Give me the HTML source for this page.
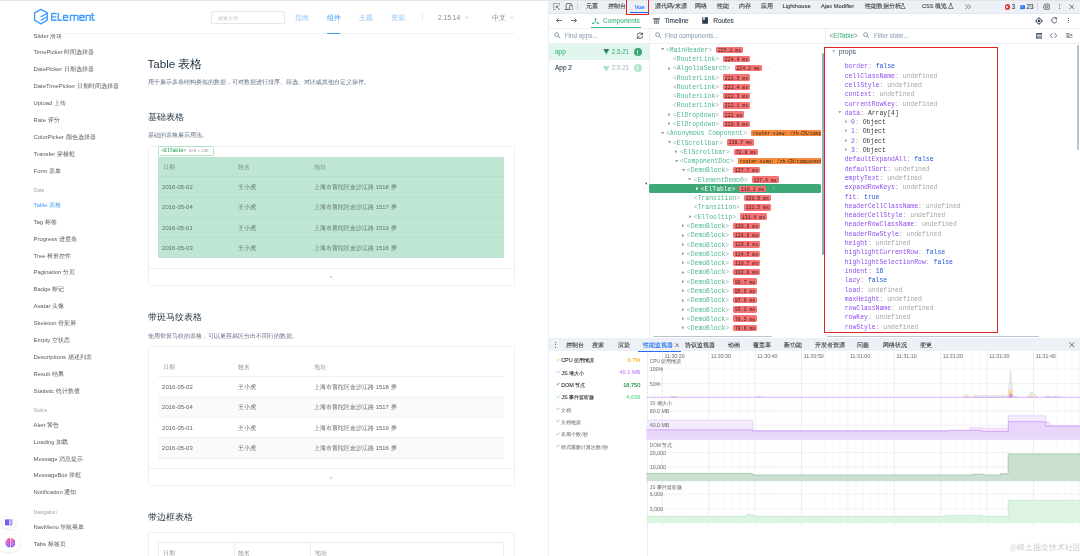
<!DOCTYPE html><html><head><meta charset="utf-8"><style>
html,body{margin:0;padding:0;width:1080px;height:556px;overflow:hidden;background:#fff}
.a,.ts,.tm,.tf{position:absolute}
.ts,.tm,.tf{white-space:nowrap}
.ts{font-family:"Liberation Sans",sans-serif}
#dt .ts{-webkit-text-stroke-width:0.1px}
.tm{font-family:"Liberation Mono",monospace}
.tf{font-family:"Liberation Serif",serif}
</style></head><body>
<div id="root" style="position:absolute;left:0;top:0;width:1080px;height:556px;background:#fff;will-change:transform;overflow:hidden">
<div class="a" style="left:0.00px;top:0.00px;width:1080.00px;height:1.00px;background:#e4e4e4"></div>
<div class="a" style="left:62.00px;top:33.00px;width:453.00px;height:0.80px;background:#f0f1f3"></div>
<svg class="a" style="left:33px;top:8px" width="64" height="18" viewBox="0 0 64 18">
<path d="M8 1.3 L14.3 4.9 L14.3 12.2 L8 15.8 L1.6 12.2 L1.6 4.9 Z" fill="none" stroke="#409eff" stroke-width="1.45" stroke-linejoin="round"/>
<path d="M8.1 8.6 L14 5.5 M8.1 12.1 L14 9.0" stroke="#409eff" stroke-width="1.4" fill="none" stroke-linecap="round"/>
</svg>
<svg class="a" style="left:48px;top:10px" width="50" height="14" viewBox="0 0 50 14"><g fill="none" stroke="#409eff" stroke-width="1.35" stroke-linejoin="round">
<path d="M8.6 3.5 H3.7 V10.2 H8.6 M3.7 6.8 H8.3"/>
<path d="M10.2 2.8 V10.2 H13.9"/>
<path d="M20.4 10.2 H16.3 Q15.5 10.2 15.5 9.4 V6.1 Q15.5 5.3 16.3 5.3 H18.9 Q19.7 5.3 19.7 6.1 V7.4 H15.5"/>
<path d="M22.5 10.9 V5.3 H29.1 Q29.9 5.3 29.9 6.1 V10.9 M26.2 5.3 V10.9"/>
<path d="M36.8 10.2 H32.7 Q31.9 10.2 31.9 9.4 V6.1 Q31.9 5.3 32.7 5.3 H35.3 Q36.1 5.3 36.1 6.1 V7.4 H31.9"/>
<path d="M38.2 10.9 V5.3 H41.3 Q42.1 5.3 42.1 6.1 V10.9"/>
<path d="M44.3 3.0 V9.4 Q44.3 10.2 45.1 10.2 H46.8 M43.0 5.3 H46.3"/>
</g></svg>
<div class="a" style="left:210.60px;top:11.20px;width:74.40px;height:13.20px;border:0.8px solid #e3e6eb;border-radius:2px;box-sizing:border-box"></div>
<div class="ts" style="left:217.50px;top:11.90px;line-height:12px;font-size:5.2px;color:#c4c8cf;">搜索文档</div>
<div class="ts" style="left:295.00px;top:11.60px;line-height:12px;font-size:6.7px;color:#8ec5fb;">指南</div>
<div class="ts" style="left:326.90px;top:11.60px;line-height:12px;font-size:6.7px;color:#409eff;">组件</div>
<div class="a" style="left:327.00px;top:32.90px;width:13.20px;height:1.30px;background:#409eff"></div>
<div class="ts" style="left:359.00px;top:11.60px;line-height:12px;font-size:6.7px;color:#8ec5fb;">主题</div>
<div class="ts" style="left:391.00px;top:11.60px;line-height:12px;font-size:6.7px;color:#8ec5fb;">资源</div>
<div class="a" style="left:422.30px;top:14.40px;width:0.70px;height:6.20px;background:#e9e9e9"></div>
<div class="ts" style="left:438.00px;top:11.60px;line-height:12px;font-size:6.7px;color:#888;">2.15.14</div>
<div class="ts" style="left:492.00px;top:11.60px;line-height:12px;font-size:6.7px;color:#888;">中文</div>
<svg class="a" style="left:465.1px;top:15.8px" width="4.4" height="3" viewBox="0 0 4.4 3"><path d="M0.3 0.5 L2.2 2.4 L4.1 0.5" fill="none" stroke="#aaa" stroke-width="0.6"/></svg>
<svg class="a" style="left:510.00000000000006px;top:15.8px" width="4.4" height="3" viewBox="0 0 4.4 3"><path d="M0.3 0.5 L2.2 2.4 L4.1 0.5" fill="none" stroke="#aaa" stroke-width="0.6"/></svg>
<div class="a" style="left:0;top:34.2px;width:140px;height:523px;overflow:hidden">
<div class="ts" style="left:33.60px;top:-4.58px;line-height:12px;font-size:5.88px;color:#5a5a5a;">Slider 滑块</div>
<div class="ts" style="left:33.60px;top:12.30px;line-height:12px;font-size:5.88px;color:#5a5a5a;">TimePicker 时间选择器</div>
<div class="ts" style="left:33.60px;top:29.18px;line-height:12px;font-size:5.88px;color:#5a5a5a;">DatePicker 日期选择器</div>
<div class="ts" style="left:33.60px;top:46.06px;line-height:12px;font-size:5.88px;color:#5a5a5a;">DateTimePicker 日期时间选择器</div>
<div class="ts" style="left:33.60px;top:62.94px;line-height:12px;font-size:5.88px;color:#5a5a5a;">Upload 上传</div>
<div class="ts" style="left:33.60px;top:79.82px;line-height:12px;font-size:5.88px;color:#5a5a5a;">Rate 评分</div>
<div class="ts" style="left:33.60px;top:96.70px;line-height:12px;font-size:5.88px;color:#5a5a5a;">ColorPicker 颜色选择器</div>
<div class="ts" style="left:33.60px;top:113.58px;line-height:12px;font-size:5.88px;color:#5a5a5a;">Transfer 穿梭框</div>
<div class="ts" style="left:33.60px;top:130.46px;line-height:12px;font-size:5.88px;color:#5a5a5a;">Form 表单</div>
<div class="ts" style="left:33.60px;top:151.20px;line-height:12px;font-size:4.95px;color:#a5a5a5;">Data</div>
<div class="ts" style="left:33.60px;top:164.72px;line-height:12px;font-size:5.88px;color:#409eff;">Table 表格</div>
<div class="ts" style="left:33.60px;top:181.60px;line-height:12px;font-size:5.88px;color:#5a5a5a;">Tag 标签</div>
<div class="ts" style="left:33.60px;top:198.48px;line-height:12px;font-size:5.88px;color:#5a5a5a;">Progress 进度条</div>
<div class="ts" style="left:33.60px;top:215.36px;line-height:12px;font-size:5.88px;color:#5a5a5a;">Tree 树形控件</div>
<div class="ts" style="left:33.60px;top:232.24px;line-height:12px;font-size:5.88px;color:#5a5a5a;">Pagination 分页</div>
<div class="ts" style="left:33.60px;top:249.12px;line-height:12px;font-size:5.88px;color:#5a5a5a;">Badge 标记</div>
<div class="ts" style="left:33.60px;top:266.00px;line-height:12px;font-size:5.88px;color:#5a5a5a;">Avatar 头像</div>
<div class="ts" style="left:33.60px;top:282.88px;line-height:12px;font-size:5.88px;color:#5a5a5a;">Skeleton 骨架屏</div>
<div class="ts" style="left:33.60px;top:299.76px;line-height:12px;font-size:5.88px;color:#5a5a5a;">Empty 空状态</div>
<div class="ts" style="left:33.60px;top:316.64px;line-height:12px;font-size:5.88px;color:#5a5a5a;">Descriptions 描述列表</div>
<div class="ts" style="left:33.60px;top:333.52px;line-height:12px;font-size:5.88px;color:#5a5a5a;">Result 结果</div>
<div class="ts" style="left:33.60px;top:350.40px;line-height:12px;font-size:5.88px;color:#5a5a5a;">Statistic 统计数值</div>
<div class="ts" style="left:33.60px;top:371.10px;line-height:12px;font-size:4.95px;color:#a5a5a5;">Notice</div>
<div class="ts" style="left:33.60px;top:384.66px;line-height:12px;font-size:5.88px;color:#5a5a5a;">Alert 警告</div>
<div class="ts" style="left:33.60px;top:401.54px;line-height:12px;font-size:5.88px;color:#5a5a5a;">Loading 加载</div>
<div class="ts" style="left:33.60px;top:418.42px;line-height:12px;font-size:5.88px;color:#5a5a5a;">Message 消息提示</div>
<div class="ts" style="left:33.60px;top:435.30px;line-height:12px;font-size:5.88px;color:#5a5a5a;">MessageBox 弹框</div>
<div class="ts" style="left:33.60px;top:452.18px;line-height:12px;font-size:5.88px;color:#5a5a5a;">Notification 通知</div>
<div class="ts" style="left:33.60px;top:473.10px;line-height:12px;font-size:4.95px;color:#a5a5a5;">Navigation</div>
<div class="ts" style="left:33.60px;top:486.44px;line-height:12px;font-size:5.88px;color:#5a5a5a;">NavMenu 导航菜单</div>
<div class="ts" style="left:33.60px;top:503.32px;line-height:12px;font-size:5.88px;color:#5a5a5a;">Tabs 标签页</div>
</div>
<div class="a" style="left:2.3px;top:515.5px;width:13.8px;height:13.8px;border-radius:50%;background:#fff;box-shadow:0 0.5px 3px rgba(0,0,0,0.12)"></div>
<svg class="a" style="left:5.4px;top:519px" width="7.6" height="6.8" viewBox="0 0 7.6 6.8"><path d="M0 0.6 L4 0.2 L4 6.6 L0 6.2 Z" fill="#7b5cf0"/><path d="M4.6 0.2 L7.4 0.6 L7.4 6.2 L4.6 6.6 Z" fill="#8f73f5"/><rect x="5.4" y="1.4" width="1.1" height="4" fill="#fff" opacity="0.8"/></svg>
<div class="a" style="left:-3px;top:534.3px;width:23px;height:18px;border-radius:9px;background:#fff;box-shadow:0 0.5px 3px rgba(0,0,0,0.12)"></div>
<svg class="a" style="left:4.5px;top:538.4px" width="10.8" height="9.8" viewBox="0 0 10.8 9.8"><defs><linearGradient id="bg" x1="0" y1="0" x2="1" y2="1"><stop offset="0" stop-color="#ff8a3d"/><stop offset="0.4" stop-color="#e94bd0"/><stop offset="0.7" stop-color="#8b5cf6"/><stop offset="1" stop-color="#3b82f6"/></linearGradient></defs>
<path d="M5.1 0.6 C3.6 0 2 0.6 1.8 1.9 C0.6 2.2 0.1 3.5 0.6 4.6 C0 5.6 0.4 7 1.5 7.4 C1.7 8.8 3.4 9.6 5.1 9 Z" fill="url(#bg)"/>
<path d="M5.7 0.6 C7.2 0 8.8 0.6 9 1.9 C10.2 2.2 10.7 3.5 10.2 4.6 C10.8 5.6 10.4 7 9.3 7.4 C9.1 8.8 7.4 9.6 5.7 9 Z" fill="url(#bg)"/>
<path d="M2.2 3.2 L4 3.2 M1.6 5.4 L3.8 5.4 M2.4 7.2 L4 6.6 M6.8 3.2 L8.6 3.2 M7 5.4 L9.2 5.4 M6.8 6.6 L8.4 7.2" stroke="#fff" stroke-width="0.45" opacity="0.8"/></svg>
<div class="ts" style="left:147.50px;top:56.10px;line-height:16px;font-size:11.6px;color:#1f2f3d;">Table 表格</div>
<div class="ts" style="left:147.50px;top:76.40px;line-height:12px;font-size:5.88px;color:#5e6d82;">用于展示多条结构类似的数据，可对数据进行排序、筛选、对比或其他自定义操作。</div>
<div class="ts" style="left:147.50px;top:109.60px;line-height:14px;font-size:9.24px;color:#1f2f3d;">基础表格</div>
<div class="ts" style="left:147.50px;top:129.30px;line-height:12px;font-size:5.88px;color:#5e6d82;">基础的表格展示用法。</div>
<div class="a" style="left:147.50px;top:146.00px;width:367.10px;height:140.10px;border:0.8px solid #efefef;border-radius:1.6px;box-sizing:border-box"></div>
<div class="a" style="left:147.90px;top:268.30px;width:366.30px;height:0.70px;background:#eff2fa"></div>
<svg class="a" style="left:328.5px;top:276.3px" width="4" height="2.6" viewBox="0 0 4 2.6"><path d="M0 0 L4 0 L2 2.4 Z" fill="#d3dce6"/></svg>
<div class="a" style="left:158.20px;top:156.90px;width:345.60px;height:100.80px;background:#bfe6d3;border-radius:0 1px 1px 1px"></div>
<div class="a" style="left:158.20px;top:176.10px;width:345.60px;height:0.60px;background:#b6dec9"></div>
<div class="a" style="left:158.20px;top:196.50px;width:345.60px;height:0.60px;background:#b6dec9"></div>
<div class="a" style="left:158.20px;top:216.90px;width:345.60px;height:0.60px;background:#b6dec9"></div>
<div class="a" style="left:158.20px;top:237.30px;width:345.60px;height:0.60px;background:#b6dec9"></div>
<div class="ts" style="left:162.70px;top:160.80px;line-height:12px;font-size:5.88px;color:#7b9184;">日期</div>
<div class="ts" style="left:237.90px;top:160.80px;line-height:12px;font-size:5.88px;color:#7b9184;">姓名</div>
<div class="ts" style="left:314.20px;top:160.80px;line-height:12px;font-size:5.88px;color:#7b9184;">地址</div>
<div class="ts" style="left:162.10px;top:180.80px;line-height:12px;font-size:6.0px;color:#5e7268;">2016-05-02</div>
<div class="ts" style="left:238.30px;top:180.80px;line-height:12px;font-size:5.88px;color:#5e7268;">王小虎</div>
<div class="ts" style="left:314.20px;top:180.80px;line-height:12px;font-size:5.88px;color:#5e7268;">上海市普陀区金沙江路 1518 弄</div>
<div class="ts" style="left:162.10px;top:201.20px;line-height:12px;font-size:6.0px;color:#5e7268;">2016-05-04</div>
<div class="ts" style="left:238.30px;top:201.20px;line-height:12px;font-size:5.88px;color:#5e7268;">王小虎</div>
<div class="ts" style="left:314.20px;top:201.20px;line-height:12px;font-size:5.88px;color:#5e7268;">上海市普陀区金沙江路 1517 弄</div>
<div class="ts" style="left:162.10px;top:221.60px;line-height:12px;font-size:6.0px;color:#5e7268;">2016-05-01</div>
<div class="ts" style="left:238.30px;top:221.60px;line-height:12px;font-size:5.88px;color:#5e7268;">王小虎</div>
<div class="ts" style="left:314.20px;top:221.60px;line-height:12px;font-size:5.88px;color:#5e7268;">上海市普陀区金沙江路 1519 弄</div>
<div class="ts" style="left:162.10px;top:242.00px;line-height:12px;font-size:6.0px;color:#5e7268;">2016-05-03</div>
<div class="ts" style="left:238.30px;top:242.00px;line-height:12px;font-size:5.88px;color:#5e7268;">王小虎</div>
<div class="ts" style="left:314.20px;top:242.00px;line-height:12px;font-size:5.88px;color:#5e7268;">上海市普陀区金沙江路 1516 弄</div>
<div class="a" style="left:157.60px;top:146.20px;width:56.90px;height:9.50px;background:#fff;border:0.7px solid #b4e2c9;border-radius:1.2px;box-sizing:border-box"></div>
<div class="tm" style="left:161.5px;top:145.95px;line-height:10px;font-size:4.56px;color:#999;font-weight:bold">&lt;<span style="color:#2fae5f">ElTable</span>&gt;</div>
<div class="ts" style="left:188.90px;top:146.00px;line-height:10px;font-size:4.4px;color:#a0a0a0;">828 × 248</div>
<div class="ts" style="left:147.60px;top:309.75px;line-height:14px;font-size:9.24px;color:#1f2f3d;">带斑马纹表格</div>
<div class="ts" style="left:147.50px;top:329.50px;line-height:12px;font-size:5.88px;color:#5e6d82;">使用带斑马纹的表格，可以更容易区分出不同行的数据。</div>
<div class="a" style="left:147.50px;top:346.40px;width:367.10px;height:140.10px;border:0.8px solid #efefef;border-radius:1.6px;box-sizing:border-box"></div>
<div class="a" style="left:147.90px;top:468.40px;width:366.30px;height:0.70px;background:#eff2fa"></div>
<svg class="a" style="left:328.5px;top:476.7px" width="4" height="2.6" viewBox="0 0 4 2.6"><path d="M0 0 L4 0 L2 2.4 Z" fill="#d3dce6"/></svg>
<div class="a" style="left:158.30px;top:396.60px;width:346.10px;height:20.50px;background:#fafafa"></div>
<div class="a" style="left:158.30px;top:437.50px;width:346.10px;height:20.60px;background:#fafafa"></div>
<div class="a" style="left:158.30px;top:375.80px;width:346.10px;height:0.70px;background:#eef0f5"></div>
<div class="a" style="left:158.30px;top:457.80px;width:346.10px;height:0.70px;background:#eef0f5"></div>
<div class="a" style="left:158.30px;top:396.30px;width:346.10px;height:0.60px;background:#f3f4f8"></div>
<div class="a" style="left:158.30px;top:416.90px;width:346.10px;height:0.60px;background:#f3f4f8"></div>
<div class="a" style="left:158.30px;top:437.30px;width:346.10px;height:0.60px;background:#f3f4f8"></div>
<div class="ts" style="left:162.70px;top:360.60px;line-height:12px;font-size:5.88px;color:#909399;">日期</div>
<div class="ts" style="left:237.90px;top:360.60px;line-height:12px;font-size:5.88px;color:#909399;">姓名</div>
<div class="ts" style="left:314.20px;top:360.60px;line-height:12px;font-size:5.88px;color:#909399;">地址</div>
<div class="ts" style="left:162.10px;top:380.90px;line-height:12px;font-size:6.0px;color:#606266;">2016-05-02</div>
<div class="ts" style="left:238.30px;top:380.90px;line-height:12px;font-size:5.88px;color:#606266;">王小虎</div>
<div class="ts" style="left:314.20px;top:380.90px;line-height:12px;font-size:5.88px;color:#606266;">上海市普陀区金沙江路 1518 弄</div>
<div class="ts" style="left:162.10px;top:401.30px;line-height:12px;font-size:6.0px;color:#606266;">2016-05-04</div>
<div class="ts" style="left:238.30px;top:401.30px;line-height:12px;font-size:5.88px;color:#606266;">王小虎</div>
<div class="ts" style="left:314.20px;top:401.30px;line-height:12px;font-size:5.88px;color:#606266;">上海市普陀区金沙江路 1517 弄</div>
<div class="ts" style="left:162.10px;top:421.70px;line-height:12px;font-size:6.0px;color:#606266;">2016-05-01</div>
<div class="ts" style="left:238.30px;top:421.70px;line-height:12px;font-size:5.88px;color:#606266;">王小虎</div>
<div class="ts" style="left:314.20px;top:421.70px;line-height:12px;font-size:5.88px;color:#606266;">上海市普陀区金沙江路 1519 弄</div>
<div class="ts" style="left:162.10px;top:442.10px;line-height:12px;font-size:6.0px;color:#606266;">2016-05-03</div>
<div class="ts" style="left:238.30px;top:442.10px;line-height:12px;font-size:5.88px;color:#606266;">王小虎</div>
<div class="ts" style="left:314.20px;top:442.10px;line-height:12px;font-size:5.88px;color:#606266;">上海市普陀区金沙江路 1516 弄</div>
<div class="ts" style="left:147.60px;top:510.20px;line-height:14px;font-size:9.24px;color:#1f2f3d;">带边框表格</div>
<div class="a" style="left:147.50px;top:531.60px;width:367.10px;height:40.00px;border:0.8px solid #efefef;border-radius:1.6px;box-sizing:border-box"></div>
<div class="a" style="left:158.30px;top:542.40px;width:346.10px;height:20.00px;border:0.7px solid #eceef1;border-bottom:none;box-sizing:border-box"></div>
<div class="a" style="left:234.40px;top:542.40px;width:0.70px;height:20.00px;background:#eceef1"></div>
<div class="a" style="left:310.30px;top:542.40px;width:0.70px;height:20.00px;background:#eceef1"></div>
<div class="ts" style="left:163.30px;top:546.60px;line-height:12px;font-size:5.88px;color:#909399;">日期</div>
<div class="ts" style="left:238.30px;top:546.60px;line-height:12px;font-size:5.88px;color:#909399;">姓名</div>
<div class="ts" style="left:314.60px;top:546.60px;line-height:12px;font-size:5.88px;color:#909399;">地址</div>
<div id="dt">
<div class="a" style="left:548.00px;top:1.00px;width:532.00px;height:555.00px;background:#fff"></div>
<div class="a" style="left:548.00px;top:0.00px;width:1.00px;height:556.00px;background:#e6eefa"></div>
<div class="a" style="left:549.00px;top:1.00px;width:531.00px;height:11.90px;background:#edf0f7"></div>
<div class="a" style="left:549.00px;top:12.90px;width:531.00px;height:0.50px;background:#e3e7ef"></div>
<svg class="a" style="left:552.8px;top:2.9px" width="7.4" height="7.4" viewBox="0 0 7.4 7.4"><path d="M2.6 6.8 H0.6 V0.6 H6.8 V2.6" fill="none" stroke="#4a4a4a" stroke-width="0.7" stroke-dasharray="1.1 0.6"/><path d="M3.2 3.2 L6.9 6.9 M3.2 3.2 H5.2 M3.2 3.2 V5.2" fill="none" stroke="#4a4a4a" stroke-width="0.7"/></svg>
<svg class="a" style="left:564.8px;top:3.0px" width="8.4" height="7.4" viewBox="0 0 8.4 7.4"><path d="M1.2 5.8 V0.6 H6.4 V1.8" fill="none" stroke="#4a4a4a" stroke-width="0.7"/><path d="M0 6.4 H4" stroke="#4a4a4a" stroke-width="0.9"/><rect x="4.6" y="2.4" width="3.3" height="4.6" rx="0.5" fill="none" stroke="#4a4a4a" stroke-width="0.7"/></svg>
<div class="a" style="left:577.00px;top:3.00px;width:0.60px;height:7.00px;background:#cfd5de"></div>
<div class="ts" style="left:585.60px;top:0.40px;line-height:12px;font-size:5.5px;color:#3a3a3a;">元素</div>
<div class="ts" style="left:608.00px;top:0.40px;line-height:12px;font-size:5.5px;color:#3a3a3a;">控制台</div>
<div class="ts" style="left:655.00px;top:0.40px;line-height:12px;font-size:5.5px;color:#3a3a3a;">源代码/来源</div>
<div class="ts" style="left:695.00px;top:0.40px;line-height:12px;font-size:5.5px;color:#3a3a3a;">网络</div>
<div class="ts" style="left:717.00px;top:0.40px;line-height:12px;font-size:5.5px;color:#3a3a3a;">性能</div>
<div class="ts" style="left:739.00px;top:0.40px;line-height:12px;font-size:5.5px;color:#3a3a3a;">内存</div>
<div class="ts" style="left:760.60px;top:0.40px;line-height:12px;font-size:5.5px;color:#3a3a3a;">应用</div>
<div class="ts" style="left:782.50px;top:0.40px;line-height:12px;font-size:5.75px;color:#3a3a3a;">Lighthouse</div>
<div class="ts" style="left:821.00px;top:0.40px;line-height:12px;font-size:5.75px;color:#3a3a3a;">Ajax Modifier</div>
<div class="ts" style="left:864.75px;top:0.40px;line-height:12px;font-size:5.5px;color:#3a3a3a;">性能数据分析</div>
<div class="ts" style="left:922.00px;top:0.40px;line-height:12px;font-size:5.5px;color:#3a3a3a;">CSS 概览</div>
<div class="ts" style="left:634.70px;top:0.50px;line-height:12px;font-size:5.7px;color:#1b6ef3;">Vue</div>
<div class="a" style="left:630.00px;top:12.10px;width:18.00px;height:0.90px;background:#1b6ef3"></div>
<svg class="a" style="left:900.2px;top:3.3px" width="5.6" height="6" viewBox="0 0 5.6 6"><path d="M1.9 0.4 H3.7 M2.2 0.4 V2.4 L0.5 5.5 H5.1 L3.4 2.4 V0.4" fill="none" stroke="#474747" stroke-width="0.65"/></svg>
<svg class="a" style="left:948.2px;top:3.3px" width="5.6" height="6" viewBox="0 0 5.6 6"><path d="M1.9 0.4 H3.7 M2.2 0.4 V2.4 L0.5 5.5 H5.1 L3.4 2.4 V0.4" fill="none" stroke="#474747" stroke-width="0.65"/></svg>
<svg class="a" style="left:964.8px;top:3.6px" width="6.5" height="5.5" viewBox="0 0 6.5 5.5"><path d="M0.5 0.5 L2.7 2.75 L0.5 5 M3.4 0.5 L5.6 2.75 L3.4 5" fill="none" stroke="#474747" stroke-width="0.7"/></svg>
<div class="a" style="left:626.00px;top:-1.00px;width:23.40px;height:15.80px;border:1.3px solid #e3242b;box-sizing:border-box"></div>
<div class="a" style="left:1004.7px;top:4.4px;width:5.3px;height:5.3px;border-radius:50%;background:#e13c3c"></div>
<div class="a" style="left:1006.40px;top:6.10px;width:1.90px;height:1.90px;background:#f6caca"></div>
<div class="ts" style="left:1011.80px;top:1.00px;line-height:12px;font-size:6.3px;color:#3a3a3a;">3</div>
<svg class="a" style="left:1019.7px;top:4.7px" width="5.4" height="5.2" viewBox="0 0 5.4 5.2"><path d="M1 0.2 H4.4 Q5.2 0.2 5.2 1 V3.2 Q5.2 4 4.4 4 H1.4 L0.3 5.0 V1 Q0.3 0.2 1 0.2 Z" fill="#1b6ef3"/><path d="M1.5 1.6 H3.9 M1.5 2.6 H3.1" stroke="#cfe0ff" stroke-width="0.45"/></svg>
<div class="ts" style="left:1026.40px;top:1.00px;line-height:12px;font-size:6.3px;color:#3a3a3a;">23</div>
<div class="a" style="left:1037.00px;top:3.00px;width:0.60px;height:7.00px;background:#cfd5de"></div>
<svg class="a" style="left:1042.8px;top:2.6px" width="7.6" height="7.6" viewBox="0 0 10 10"><path d="M5 0.6 L6 1.7 L7.6 1.4 L8 3 L9.4 3.8 L8.8 5.2 L9.4 6.4 L8 7.2 L7.6 8.7 L6 8.4 L5 9.5 L4 8.4 L2.4 8.7 L2 7.2 L0.6 6.4 L1.2 5 L0.6 3.8 L2 3 L2.4 1.4 L4 1.7 Z" fill="none" stroke="#474747" stroke-width="1"/><circle cx="5" cy="5" r="1.7" fill="none" stroke="#474747" stroke-width="1"/></svg>
<div class="a" style="left:1058.5px;top:3.5px;width:1.1px;height:1.1px;border-radius:50%;background:#474747"></div>
<div class="a" style="left:1058.5px;top:5.7px;width:1.1px;height:1.1px;border-radius:50%;background:#474747"></div>
<div class="a" style="left:1058.5px;top:7.9px;width:1.1px;height:1.1px;border-radius:50%;background:#474747"></div>
<svg class="a" style="left:1068.8px;top:3.6px" width="5.6" height="5.6" viewBox="0 0 5.6 5.6"><path d="M0.4 0.4 L5.2 5.2 M5.2 0.4 L0.4 5.2" stroke="#474747" stroke-width="0.75"/></svg>
<div class="a" style="left:549.00px;top:27.50px;width:531.00px;height:0.70px;background:#eff0f3"></div>
<svg class="a" style="left:556.3px;top:18.2px" width="6" height="5" viewBox="0 0 6 5"><path d="M5.8 2.5 H0.6 M2.6 0.4 L0.5 2.5 L2.6 4.6" fill="none" stroke="#2c3e50" stroke-width="0.75"/></svg>
<svg class="a" style="left:571.3px;top:18.2px" width="6" height="5" viewBox="0 0 6 5"><path d="M0.2 2.5 H5.4 M3.4 0.4 L5.5 2.5 L3.4 4.6" fill="none" stroke="#2c3e50" stroke-width="0.75"/></svg>
<svg class="a" style="left:591.8px;top:17.5px" width="7" height="6.6" viewBox="0 0 7 6.6"><path d="M3.5 1 V3.5 L1 5.6 M3.5 3.5 L6 5.6" fill="none" stroke="#42b883" stroke-width="0.8"/><circle cx="3.5" cy="1.1" r="1" fill="#42b883"/><circle cx="1" cy="5.6" r="1" fill="#42b883"/><circle cx="6" cy="5.6" r="1" fill="#42b883"/></svg>
<div class="ts" style="left:603.00px;top:14.60px;line-height:12px;font-size:6.5px;color:#42b883;">Components</div>
<div class="a" style="left:591.00px;top:26.80px;width:50.00px;height:0.90px;background:#42b883"></div>
<svg class="a" style="left:653.2px;top:17.7px" width="7" height="6" viewBox="0 0 7 6"><rect x="0.3" y="0.3" width="6.4" height="1.3" fill="#2c3e50"/><path d="M0.8 2.8 H6.2 M0.8 4 H6.2 M0.8 5.2 H6.2 M1.6 2.4 V5.6 M3.5 2.4 V5.6 M5.4 2.4 V5.6" stroke="#2c3e50" stroke-width="0.45"/></svg>
<div class="ts" style="left:664.40px;top:14.60px;line-height:12px;font-size:6.5px;color:#2c3e50;">Timeline</div>
<svg class="a" style="left:702px;top:17.3px" width="6.2" height="7" viewBox="0 0 6.2 7"><rect x="0.2" y="0.2" width="5.8" height="6.6" rx="0.5" fill="#2c3e50"/><rect x="1.2" y="0.2" width="1.6" height="2.6" fill="#fff"/></svg>
<div class="ts" style="left:713.20px;top:14.60px;line-height:12px;font-size:6.5px;color:#2c3e50;">Routes</div>
<svg class="a" style="left:1035px;top:16.6px" width="8" height="8" viewBox="0 0 8 8"><circle cx="4" cy="4" r="2.6" fill="none" stroke="#2c3e50" stroke-width="0.8"/><circle cx="4" cy="4" r="1.3" fill="#2c3e50"/><path d="M4 0 V1.3 M4 6.7 V8 M0 4 H1.3 M6.7 4 H8" stroke="#2c3e50" stroke-width="0.8"/></svg>
<svg class="a" style="left:1050.8px;top:17.2px" width="6.6" height="6.6" viewBox="0 0 6.6 6.6"><path d="M5.6 2.2 A2.6 2.6 0 1 0 5.9 3.6" fill="none" stroke="#2c3e50" stroke-width="0.8"/><path d="M4.2 0.6 L5.9 1 L5.6 2.7" fill="none" stroke="#2c3e50" stroke-width="0.8"/></svg>
<div class="a" style="left:1068.2px;top:18.0px;width:1.1px;height:1.1px;border-radius:50%;background:#2c3e50"></div>
<div class="a" style="left:1068.2px;top:20.2px;width:1.1px;height:1.1px;border-radius:50%;background:#2c3e50"></div>
<div class="a" style="left:1068.2px;top:22.4px;width:1.1px;height:1.1px;border-radius:50%;background:#2c3e50"></div>
<div class="a" style="left:549.00px;top:42.90px;width:531.00px;height:0.70px;background:#eff0f3"></div>
<svg class="a" style="left:554px;top:32.3px" width="6.6" height="6.6" viewBox="0 0 6.6 6.6"><circle cx="2.6" cy="2.6" r="2" fill="none" stroke="#7b8da0" stroke-width="0.8"/><path d="M4.1 4.1 L6.2 6.2" stroke="#7b8da0" stroke-width="0.9"/></svg>
<div class="ts" style="left:564.75px;top:29.60px;line-height:12px;font-size:6.3px;color:#9aaabb;">Find apps...</div>
<svg class="a" style="left:636px;top:32px" width="8" height="7.4" viewBox="0 0 8 7.4"><path d="M1.3 3.4 A2.7 2.7 0 0 1 6.3 2.2 M6.7 4 A2.7 2.7 0 0 1 1.7 5.2" fill="none" stroke="#2c3e50" stroke-width="0.8"/><path d="M6.6 0.6 V2.6 H4.6 M1.4 6.8 V4.8 H3.4" fill="none" stroke="#2c3e50" stroke-width="0.8"/></svg>
<div class="a" style="left:648.60px;top:27.90px;width:0.70px;height:310.40px;background:#eceef2"></div>
<svg class="a" style="left:655.3px;top:32.3px" width="6.6" height="6.6" viewBox="0 0 6.6 6.6"><circle cx="2.6" cy="2.6" r="2" fill="none" stroke="#7b8da0" stroke-width="0.8"/><path d="M4.1 4.1 L6.2 6.2" stroke="#7b8da0" stroke-width="0.9"/></svg>
<div class="ts" style="left:665.00px;top:29.60px;line-height:12px;font-size:6.3px;color:#9aaabb;">Find components...</div>
<div class="a" style="left:825.20px;top:27.90px;width:0.70px;height:19.50px;background:#eceef2"></div>
<div class="a" style="left:825.20px;top:333.00px;width:0.70px;height:5.30px;background:#eceef2"></div>
<div class="ts" style="left:829.6px;top:29.6px;line-height:12px;font-size:6.3px;color:#7d8a96">&lt;<span style="color:#42b883">ElTable</span>&gt;</div>
<svg class="a" style="left:862.8px;top:32.3px" width="6.6" height="6.6" viewBox="0 0 6.6 6.6"><circle cx="2.6" cy="2.6" r="2" fill="none" stroke="#7b8da0" stroke-width="0.8"/><path d="M4.1 4.1 L6.2 6.2" stroke="#7b8da0" stroke-width="0.9"/></svg>
<div class="ts" style="left:874.00px;top:29.60px;line-height:12px;font-size:6.3px;color:#9aaabb;">Filter state...</div>
<svg class="a" style="left:1035.8px;top:32.6px" width="6.4" height="6.4" viewBox="0 0 6.4 6.4"><rect x="0.4" y="0.4" width="5.6" height="5.6" rx="0.3" fill="none" stroke="#2c3e50" stroke-width="0.8"/><rect x="0.4" y="0.4" width="5.6" height="1.1" fill="#2c3e50"/><path d="M0.8 3.1 H5.6 M0.8 4.6 H5.6" stroke="#2c3e50" stroke-width="0.7"/></svg>
<svg class="a" style="left:1050.3px;top:33px" width="7" height="5.2" viewBox="0 0 7 5.2"><path d="M2.2 0.4 L0.4 2.6 L2.2 4.8 M4.8 0.4 L6.6 2.6 L4.8 4.8" fill="none" stroke="#2c3e50" stroke-width="0.75"/></svg>
<svg class="a" style="left:1066px;top:33px" width="6.6" height="5.4" viewBox="0 0 6.6 5.4"><path d="M0.2 0.6 H3.6 M0.2 2 H3.6 M0.2 3.4 H3.6 M0.2 4.8 H6.4 M4.3 1 L6.3 3.2 M6.3 1 L4.3 3.2" stroke="#2c3e50" stroke-width="0.6"/></svg>
<div class="a" style="left:549.00px;top:43.40px;width:99.60px;height:16.50px;background:#e2f6ed"></div>
<div class="ts" style="left:555.00px;top:46.00px;line-height:12px;font-size:6.5px;color:#42b883;">app</div>
<svg class="a" style="left:603px;top:49.2px;opacity:1" width="6.6" height="5.8" viewBox="0 0 6.6 5.8"><path d="M0 0 H2.6 L3.3 1.2 L4 0 H6.6 L3.3 5.8 Z" fill="#42b883"/><path d="M1.3 0 H2.6 L3.3 1.2 L4 0 H5.3 L3.3 3.5 Z" fill="#35495e"/></svg>
<div class="ts" style="left:611.70px;top:46.00px;line-height:12px;font-size:6.3px;color:#42b883;">2.5.21</div>
<div class="a" style="left:633.8px;top:48px;width:7.9px;height:7.9px;border-radius:50%;background:#3ba776"></div>
<div class="a" style="left:637.30px;top:49.80px;width:0.90px;height:3.20px;background:#e2f6ed;border-radius:0.4px"></div>
<div class="a" style="left:637.30px;top:53.60px;width:0.90px;height:0.90px;background:#e2f6ed"></div>
<div class="ts" style="left:555.00px;top:62.30px;line-height:12px;font-size:6.5px;color:#2c3e50;">App 2</div>
<svg class="a" style="left:603px;top:65.5px;opacity:0.45" width="6.6" height="5.8" viewBox="0 0 6.6 5.8"><path d="M0 0 H2.6 L3.3 1.2 L4 0 H6.6 L3.3 5.8 Z" fill="#42b883"/><path d="M1.3 0 H2.6 L3.3 1.2 L4 0 H5.3 L3.3 3.5 Z" fill="#42b883"/></svg>
<div class="ts" style="left:611.70px;top:62.30px;line-height:12px;font-size:6.3px;color:#b3bcc4;">2.5.21</div>
<div class="a" style="left:633.8px;top:64.3px;width:7.9px;height:7.9px;border-radius:50%;background:#b6e4cf"></div>
<div class="a" style="left:637.30px;top:66.10px;width:0.90px;height:3.20px;background:#fff;border-radius:0.4px"></div>
<div class="a" style="left:637.30px;top:69.90px;width:0.90px;height:0.90px;background:#fff"></div>
<div class="a" style="left:649.3px;top:43.5px;width:171.6px;height:292px;overflow:hidden">
<div class="a" style="left:-0.30px;top:140.50px;width:171.9px;height:9.1px;border-radius:1.6px;background:#3ea877"></div>
<div class="tm" style="left:17.70px;top:-9.10px;line-height:12px;font-size:6.42px;color:#42b883">&lt;Root&gt;</div>
<svg class="a" style="left:11.40px;top:4.90px" width="3.2" height="2.6" viewBox="0 0 3.2 2.6"><path d="M0 0 H3.2 L1.6 2.6 Z" fill="#9aa3ab"/></svg>
<div class="tm" style="left:16.70px;top:1.30px;line-height:12px;font-size:6.42px;color:#a3abb2">&lt;<span style="color:#4cb98a">MainHeader</span>&gt;</div>
<div class="a" style="left:66.92px;top:3.00px;width:27.04px;height:6.4px;background:#f57373;border-radius:1.4px"></div>
<div class="tm" style="left:68.62px;top:1.20px;line-height:12px;font-size:4.85px;color:#3b1a1a">225.1 ms</div>
<div class="a" style="left:100.26px;top:5.70px;width:1px;height:1px;border-radius:50%;background:#bfe3d1"></div>
<div class="tm" style="left:23.65px;top:10.58px;line-height:12px;font-size:6.42px;color:#a3abb2">&lt;<span style="color:#4cb98a">RouterLink</span>&gt;</div>
<div class="a" style="left:73.87px;top:12.27px;width:27.04px;height:6.4px;background:#f57373;border-radius:1.4px"></div>
<div class="tm" style="left:75.57px;top:10.48px;line-height:12px;font-size:4.85px;color:#3b1a1a">224.4 ms</div>
<div class="a" style="left:107.21px;top:14.98px;width:1px;height:1px;border-radius:50%;background:#bfe3d1"></div>
<svg class="a" style="left:18.65px;top:23.15px" width="2.6" height="3.2" viewBox="0 0 2.6 3.2"><path d="M0 0 V3.2 L2.6 1.6 Z" fill="#9aa3ab"/></svg>
<div class="tm" style="left:23.65px;top:19.85px;line-height:12px;font-size:6.42px;color:#a3abb2">&lt;<span style="color:#4cb98a">AlgoliaSearch</span>&gt;</div>
<div class="a" style="left:85.43px;top:21.55px;width:27.04px;height:6.4px;background:#f57373;border-radius:1.4px"></div>
<div class="tm" style="left:87.13px;top:19.75px;line-height:12px;font-size:4.85px;color:#3b1a1a">224.2 ms</div>
<div class="a" style="left:118.77px;top:24.25px;width:1px;height:1px;border-radius:50%;background:#bfe3d1"></div>
<div class="tm" style="left:23.65px;top:29.12px;line-height:12px;font-size:6.42px;color:#a3abb2">&lt;<span style="color:#4cb98a">RouterLink</span>&gt;</div>
<div class="a" style="left:73.87px;top:30.83px;width:27.04px;height:6.4px;background:#f57373;border-radius:1.4px"></div>
<div class="tm" style="left:75.57px;top:29.03px;line-height:12px;font-size:4.85px;color:#3b1a1a">222.5 ms</div>
<div class="a" style="left:107.21px;top:33.53px;width:1px;height:1px;border-radius:50%;background:#bfe3d1"></div>
<div class="tm" style="left:23.65px;top:38.40px;line-height:12px;font-size:6.42px;color:#a3abb2">&lt;<span style="color:#4cb98a">RouterLink</span>&gt;</div>
<div class="a" style="left:73.87px;top:40.10px;width:27.04px;height:6.4px;background:#f57373;border-radius:1.4px"></div>
<div class="tm" style="left:75.57px;top:38.30px;line-height:12px;font-size:4.85px;color:#3b1a1a">222.4 ms</div>
<div class="a" style="left:107.21px;top:42.80px;width:1px;height:1px;border-radius:50%;background:#bfe3d1"></div>
<div class="tm" style="left:23.65px;top:47.67px;line-height:12px;font-size:6.42px;color:#a3abb2">&lt;<span style="color:#4cb98a">RouterLink</span>&gt;</div>
<div class="a" style="left:73.87px;top:49.38px;width:27.04px;height:6.4px;background:#f57373;border-radius:1.4px"></div>
<div class="tm" style="left:75.57px;top:47.58px;line-height:12px;font-size:4.85px;color:#3b1a1a">222.3 ms</div>
<div class="a" style="left:107.21px;top:52.08px;width:1px;height:1px;border-radius:50%;background:#bfe3d1"></div>
<div class="tm" style="left:23.65px;top:56.95px;line-height:12px;font-size:6.42px;color:#a3abb2">&lt;<span style="color:#4cb98a">RouterLink</span>&gt;</div>
<div class="a" style="left:73.87px;top:58.65px;width:27.04px;height:6.4px;background:#f57373;border-radius:1.4px"></div>
<div class="tm" style="left:75.57px;top:56.85px;line-height:12px;font-size:4.85px;color:#3b1a1a">222.1 ms</div>
<div class="a" style="left:107.21px;top:61.35px;width:1px;height:1px;border-radius:50%;background:#bfe3d1"></div>
<svg class="a" style="left:18.65px;top:69.53px" width="2.6" height="3.2" viewBox="0 0 2.6 3.2"><path d="M0 0 V3.2 L2.6 1.6 Z" fill="#9aa3ab"/></svg>
<div class="tm" style="left:23.65px;top:66.22px;line-height:12px;font-size:6.42px;color:#a3abb2">&lt;<span style="color:#4cb98a">ElDropdown</span>&gt;</div>
<div class="a" style="left:73.87px;top:67.92px;width:21.18px;height:6.4px;background:#f57373;border-radius:1.4px"></div>
<div class="tm" style="left:75.57px;top:66.12px;line-height:12px;font-size:4.85px;color:#3b1a1a">222 ms</div>
<div class="a" style="left:101.35px;top:70.62px;width:1px;height:1px;border-radius:50%;background:#bfe3d1"></div>
<svg class="a" style="left:18.65px;top:78.80px" width="2.6" height="3.2" viewBox="0 0 2.6 3.2"><path d="M0 0 V3.2 L2.6 1.6 Z" fill="#9aa3ab"/></svg>
<div class="tm" style="left:23.65px;top:75.50px;line-height:12px;font-size:6.42px;color:#a3abb2">&lt;<span style="color:#4cb98a">ElDropdown</span>&gt;</div>
<div class="a" style="left:73.87px;top:77.20px;width:27.04px;height:6.4px;background:#f57373;border-radius:1.4px"></div>
<div class="tm" style="left:75.57px;top:75.40px;line-height:12px;font-size:4.85px;color:#3b1a1a">220.9 ms</div>
<div class="a" style="left:107.21px;top:79.90px;width:1px;height:1px;border-radius:50%;background:#bfe3d1"></div>
<svg class="a" style="left:11.40px;top:88.38px" width="3.2" height="2.6" viewBox="0 0 3.2 2.6"><path d="M0 0 H3.2 L1.6 2.6 Z" fill="#9aa3ab"/></svg>
<div class="tm" style="left:16.70px;top:84.78px;line-height:12px;font-size:6.42px;color:#a3abb2">&lt;<span style="color:#4cb98a">Anonymous Component</span>&gt;</div>
<div class="a" style="left:101.89px;top:86.48px;width:200px;height:6.4px;background:#fb8c3f;border-radius:1px"></div>
<div class="tm" style="left:103.59px;top:84.68px;line-height:12px;font-size:4.75px;color:#2a1a0a">router-view: /zh-CN/component/table</div>
<svg class="a" style="left:18.35px;top:97.65px" width="3.2" height="2.6" viewBox="0 0 3.2 2.6"><path d="M0 0 H3.2 L1.6 2.6 Z" fill="#9aa3ab"/></svg>
<div class="tm" style="left:23.65px;top:94.05px;line-height:12px;font-size:6.42px;color:#a3abb2">&lt;<span style="color:#4cb98a">ElScrollbar</span>&gt;</div>
<div class="a" style="left:77.73px;top:95.75px;width:27.04px;height:6.4px;background:#f57373;border-radius:1.4px"></div>
<div class="tm" style="left:79.43px;top:93.95px;line-height:12px;font-size:4.85px;color:#3b1a1a">218.7 ms</div>
<div class="a" style="left:111.07px;top:98.45px;width:1px;height:1px;border-radius:50%;background:#bfe3d1"></div>
<svg class="a" style="left:25.60px;top:106.63px" width="2.6" height="3.2" viewBox="0 0 2.6 3.2"><path d="M0 0 V3.2 L2.6 1.6 Z" fill="#9aa3ab"/></svg>
<div class="tm" style="left:30.60px;top:103.33px;line-height:12px;font-size:6.42px;color:#a3abb2">&lt;<span style="color:#4cb98a">ElScrollbar</span>&gt;</div>
<div class="a" style="left:84.68px;top:105.03px;width:24.11px;height:6.4px;background:#f57373;border-radius:1.4px"></div>
<div class="tm" style="left:86.38px;top:103.23px;line-height:12px;font-size:4.85px;color:#3b1a1a">72.8 ms</div>
<div class="a" style="left:115.09px;top:107.73px;width:1px;height:1px;border-radius:50%;background:#bfe3d1"></div>
<svg class="a" style="left:25.30px;top:116.20px" width="3.2" height="2.6" viewBox="0 0 3.2 2.6"><path d="M0 0 H3.2 L1.6 2.6 Z" fill="#9aa3ab"/></svg>
<div class="tm" style="left:30.60px;top:112.60px;line-height:12px;font-size:6.42px;color:#a3abb2">&lt;<span style="color:#4cb98a">ComponentDoc</span>&gt;</div>
<div class="a" style="left:88.83px;top:114.30px;width:200px;height:6.4px;background:#fb8c3f;border-radius:1px"></div>
<div class="tm" style="left:90.53px;top:112.50px;line-height:12px;font-size:4.75px;color:#2a1a0a">router-view: /zh-CN/component/table</div>
<svg class="a" style="left:32.25px;top:125.47px" width="3.2" height="2.6" viewBox="0 0 3.2 2.6"><path d="M0 0 H3.2 L1.6 2.6 Z" fill="#9aa3ab"/></svg>
<div class="tm" style="left:37.55px;top:121.88px;line-height:12px;font-size:6.42px;color:#a3abb2">&lt;<span style="color:#4cb98a">DemoBlock</span>&gt;</div>
<div class="a" style="left:83.92px;top:123.58px;width:27.04px;height:6.4px;background:#f57373;border-radius:1.4px"></div>
<div class="tm" style="left:85.62px;top:121.78px;line-height:12px;font-size:4.85px;color:#3b1a1a">137.7 ms</div>
<div class="a" style="left:117.26px;top:126.28px;width:1px;height:1px;border-radius:50%;background:#bfe3d1"></div>
<svg class="a" style="left:39.20px;top:134.75px" width="3.2" height="2.6" viewBox="0 0 3.2 2.6"><path d="M0 0 H3.2 L1.6 2.6 Z" fill="#9aa3ab"/></svg>
<div class="tm" style="left:44.50px;top:131.15px;line-height:12px;font-size:6.42px;color:#a3abb2">&lt;<span style="color:#4cb98a">ElementDemo0</span>&gt;</div>
<div class="a" style="left:102.43px;top:132.85px;width:27.04px;height:6.4px;background:#f57373;border-radius:1.4px"></div>
<div class="tm" style="left:104.13px;top:131.05px;line-height:12px;font-size:4.85px;color:#3b1a1a">137.4 ms</div>
<div class="a" style="left:135.77px;top:135.55px;width:1px;height:1px;border-radius:50%;background:#bfe3d1"></div>
<svg class="a" style="left:46.45px;top:143.72px" width="2.6" height="3.2" viewBox="0 0 2.6 3.2"><path d="M0 0 V3.2 L2.6 1.6 Z" fill="#fff"/></svg>
<div class="tm" style="left:51.45px;top:140.42px;line-height:12px;font-size:6.42px;color:#fff">&lt;<span style="color:#fff">ElTable</span>&gt;</div>
<div class="a" style="left:90.12px;top:142.12px;width:27.04px;height:6.4px;background:#f57373;border-radius:1.4px"></div>
<div class="tm" style="left:91.82px;top:140.32px;line-height:12px;font-size:4.85px;color:#3b1a1a">116.2 ms</div>
<div class="a" style="left:123.46px;top:144.82px;width:1px;height:1px;border-radius:50%;background:#d9f0e5"></div>
<div class="tm" style="left:44.50px;top:149.70px;line-height:12px;font-size:6.42px;color:#a3abb2">&lt;<span style="color:#4cb98a">Transition</span>&gt;</div>
<div class="a" style="left:94.72px;top:151.40px;width:27.04px;height:6.4px;background:#f57373;border-radius:1.4px"></div>
<div class="tm" style="left:96.42px;top:149.60px;line-height:12px;font-size:4.85px;color:#3b1a1a">131.6 ms</div>
<div class="a" style="left:128.06px;top:154.10px;width:1px;height:1px;border-radius:50%;background:#bfe3d1"></div>
<div class="tm" style="left:44.50px;top:158.97px;line-height:12px;font-size:6.42px;color:#a3abb2">&lt;<span style="color:#4cb98a">Transition</span>&gt;</div>
<div class="a" style="left:94.72px;top:160.68px;width:27.04px;height:6.4px;background:#f57373;border-radius:1.4px"></div>
<div class="tm" style="left:96.42px;top:158.88px;line-height:12px;font-size:4.85px;color:#3b1a1a">131.5 ms</div>
<div class="a" style="left:128.06px;top:163.38px;width:1px;height:1px;border-radius:50%;background:#bfe3d1"></div>
<svg class="a" style="left:39.50px;top:171.55px" width="2.6" height="3.2" viewBox="0 0 2.6 3.2"><path d="M0 0 V3.2 L2.6 1.6 Z" fill="#9aa3ab"/></svg>
<div class="tm" style="left:44.50px;top:168.25px;line-height:12px;font-size:6.42px;color:#a3abb2">&lt;<span style="color:#4cb98a">ElTooltip</span>&gt;</div>
<div class="a" style="left:90.87px;top:169.95px;width:27.04px;height:6.4px;background:#f57373;border-radius:1.4px"></div>
<div class="tm" style="left:92.57px;top:168.15px;line-height:12px;font-size:4.85px;color:#3b1a1a">131.4 ms</div>
<div class="a" style="left:124.21px;top:172.65px;width:1px;height:1px;border-radius:50%;background:#bfe3d1"></div>
<svg class="a" style="left:32.55px;top:180.83px" width="2.6" height="3.2" viewBox="0 0 2.6 3.2"><path d="M0 0 V3.2 L2.6 1.6 Z" fill="#9aa3ab"/></svg>
<div class="tm" style="left:37.55px;top:177.53px;line-height:12px;font-size:6.42px;color:#a3abb2">&lt;<span style="color:#4cb98a">DemoBlock</span>&gt;</div>
<div class="a" style="left:83.92px;top:179.23px;width:27.04px;height:6.4px;background:#f57373;border-radius:1.4px"></div>
<div class="tm" style="left:85.62px;top:177.43px;line-height:12px;font-size:4.85px;color:#3b1a1a">130.9 ms</div>
<div class="a" style="left:117.26px;top:181.93px;width:1px;height:1px;border-radius:50%;background:#bfe3d1"></div>
<svg class="a" style="left:32.55px;top:190.10px" width="2.6" height="3.2" viewBox="0 0 2.6 3.2"><path d="M0 0 V3.2 L2.6 1.6 Z" fill="#9aa3ab"/></svg>
<div class="tm" style="left:37.55px;top:186.80px;line-height:12px;font-size:6.42px;color:#a3abb2">&lt;<span style="color:#4cb98a">DemoBlock</span>&gt;</div>
<div class="a" style="left:83.92px;top:188.50px;width:27.04px;height:6.4px;background:#f57373;border-radius:1.4px"></div>
<div class="tm" style="left:85.62px;top:186.70px;line-height:12px;font-size:4.85px;color:#3b1a1a">128.6 ms</div>
<div class="a" style="left:117.26px;top:191.20px;width:1px;height:1px;border-radius:50%;background:#bfe3d1"></div>
<svg class="a" style="left:32.55px;top:199.38px" width="2.6" height="3.2" viewBox="0 0 2.6 3.2"><path d="M0 0 V3.2 L2.6 1.6 Z" fill="#9aa3ab"/></svg>
<div class="tm" style="left:37.55px;top:196.08px;line-height:12px;font-size:6.42px;color:#a3abb2">&lt;<span style="color:#4cb98a">DemoBlock</span>&gt;</div>
<div class="a" style="left:83.92px;top:197.78px;width:27.04px;height:6.4px;background:#f57373;border-radius:1.4px"></div>
<div class="tm" style="left:85.62px;top:195.98px;line-height:12px;font-size:4.85px;color:#3b1a1a">120.6 ms</div>
<div class="a" style="left:117.26px;top:200.48px;width:1px;height:1px;border-radius:50%;background:#bfe3d1"></div>
<svg class="a" style="left:32.55px;top:208.65px" width="2.6" height="3.2" viewBox="0 0 2.6 3.2"><path d="M0 0 V3.2 L2.6 1.6 Z" fill="#9aa3ab"/></svg>
<div class="tm" style="left:37.55px;top:205.35px;line-height:12px;font-size:6.42px;color:#a3abb2">&lt;<span style="color:#4cb98a">DemoBlock</span>&gt;</div>
<div class="a" style="left:83.92px;top:207.05px;width:27.04px;height:6.4px;background:#f57373;border-radius:1.4px"></div>
<div class="tm" style="left:85.62px;top:205.25px;line-height:12px;font-size:4.85px;color:#3b1a1a">114.5 ms</div>
<div class="a" style="left:117.26px;top:209.75px;width:1px;height:1px;border-radius:50%;background:#bfe3d1"></div>
<svg class="a" style="left:32.55px;top:217.93px" width="2.6" height="3.2" viewBox="0 0 2.6 3.2"><path d="M0 0 V3.2 L2.6 1.6 Z" fill="#9aa3ab"/></svg>
<div class="tm" style="left:37.55px;top:214.63px;line-height:12px;font-size:6.42px;color:#a3abb2">&lt;<span style="color:#4cb98a">DemoBlock</span>&gt;</div>
<div class="a" style="left:83.92px;top:216.33px;width:27.04px;height:6.4px;background:#f57373;border-radius:1.4px"></div>
<div class="tm" style="left:85.62px;top:214.53px;line-height:12px;font-size:4.85px;color:#3b1a1a">110.7 ms</div>
<div class="a" style="left:117.26px;top:219.03px;width:1px;height:1px;border-radius:50%;background:#bfe3d1"></div>
<svg class="a" style="left:32.55px;top:227.20px" width="2.6" height="3.2" viewBox="0 0 2.6 3.2"><path d="M0 0 V3.2 L2.6 1.6 Z" fill="#9aa3ab"/></svg>
<div class="tm" style="left:37.55px;top:223.90px;line-height:12px;font-size:6.42px;color:#a3abb2">&lt;<span style="color:#4cb98a">DemoBlock</span>&gt;</div>
<div class="a" style="left:83.92px;top:225.60px;width:27.04px;height:6.4px;background:#f57373;border-radius:1.4px"></div>
<div class="tm" style="left:85.62px;top:223.80px;line-height:12px;font-size:4.85px;color:#3b1a1a">102.6 ms</div>
<div class="a" style="left:117.26px;top:228.30px;width:1px;height:1px;border-radius:50%;background:#bfe3d1"></div>
<svg class="a" style="left:32.55px;top:236.47px" width="2.6" height="3.2" viewBox="0 0 2.6 3.2"><path d="M0 0 V3.2 L2.6 1.6 Z" fill="#9aa3ab"/></svg>
<div class="tm" style="left:37.55px;top:233.18px;line-height:12px;font-size:6.42px;color:#a3abb2">&lt;<span style="color:#4cb98a">DemoBlock</span>&gt;</div>
<div class="a" style="left:83.92px;top:234.88px;width:24.11px;height:6.4px;background:#f57373;border-radius:1.4px"></div>
<div class="tm" style="left:85.62px;top:233.07px;line-height:12px;font-size:4.85px;color:#3b1a1a">99.7 ms</div>
<div class="a" style="left:114.33px;top:237.57px;width:1px;height:1px;border-radius:50%;background:#bfe3d1"></div>
<svg class="a" style="left:32.55px;top:245.75px" width="2.6" height="3.2" viewBox="0 0 2.6 3.2"><path d="M0 0 V3.2 L2.6 1.6 Z" fill="#9aa3ab"/></svg>
<div class="tm" style="left:37.55px;top:242.45px;line-height:12px;font-size:6.42px;color:#a3abb2">&lt;<span style="color:#4cb98a">DemoBlock</span>&gt;</div>
<div class="a" style="left:83.92px;top:244.15px;width:24.11px;height:6.4px;background:#f57373;border-radius:1.4px"></div>
<div class="tm" style="left:85.62px;top:242.35px;line-height:12px;font-size:4.85px;color:#3b1a1a">95.6 ms</div>
<div class="a" style="left:114.33px;top:246.85px;width:1px;height:1px;border-radius:50%;background:#bfe3d1"></div>
<svg class="a" style="left:32.55px;top:255.02px" width="2.6" height="3.2" viewBox="0 0 2.6 3.2"><path d="M0 0 V3.2 L2.6 1.6 Z" fill="#9aa3ab"/></svg>
<div class="tm" style="left:37.55px;top:251.73px;line-height:12px;font-size:6.42px;color:#a3abb2">&lt;<span style="color:#4cb98a">DemoBlock</span>&gt;</div>
<div class="a" style="left:83.92px;top:253.43px;width:24.11px;height:6.4px;background:#f57373;border-radius:1.4px"></div>
<div class="tm" style="left:85.62px;top:251.62px;line-height:12px;font-size:4.85px;color:#3b1a1a">87.6 ms</div>
<div class="a" style="left:114.33px;top:256.12px;width:1px;height:1px;border-radius:50%;background:#bfe3d1"></div>
<svg class="a" style="left:32.55px;top:264.30px" width="2.6" height="3.2" viewBox="0 0 2.6 3.2"><path d="M0 0 V3.2 L2.6 1.6 Z" fill="#9aa3ab"/></svg>
<div class="tm" style="left:37.55px;top:261.00px;line-height:12px;font-size:6.42px;color:#a3abb2">&lt;<span style="color:#4cb98a">DemoBlock</span>&gt;</div>
<div class="a" style="left:83.92px;top:262.70px;width:24.11px;height:6.4px;background:#f57373;border-radius:1.4px"></div>
<div class="tm" style="left:85.62px;top:260.90px;line-height:12px;font-size:4.85px;color:#3b1a1a">83.2 ms</div>
<div class="a" style="left:114.33px;top:265.40px;width:1px;height:1px;border-radius:50%;background:#bfe3d1"></div>
<svg class="a" style="left:32.55px;top:273.57px" width="2.6" height="3.2" viewBox="0 0 2.6 3.2"><path d="M0 0 V3.2 L2.6 1.6 Z" fill="#9aa3ab"/></svg>
<div class="tm" style="left:37.55px;top:270.28px;line-height:12px;font-size:6.42px;color:#a3abb2">&lt;<span style="color:#4cb98a">DemoBlock</span>&gt;</div>
<div class="a" style="left:83.92px;top:271.98px;width:24.11px;height:6.4px;background:#f57373;border-radius:1.4px"></div>
<div class="tm" style="left:85.62px;top:270.18px;line-height:12px;font-size:4.85px;color:#3b1a1a">78.5 ms</div>
<div class="a" style="left:114.33px;top:274.68px;width:1px;height:1px;border-radius:50%;background:#bfe3d1"></div>
<svg class="a" style="left:32.55px;top:282.85px" width="2.6" height="3.2" viewBox="0 0 2.6 3.2"><path d="M0 0 V3.2 L2.6 1.6 Z" fill="#9aa3ab"/></svg>
<div class="tm" style="left:37.55px;top:279.55px;line-height:12px;font-size:6.42px;color:#a3abb2">&lt;<span style="color:#4cb98a">DemoBlock</span>&gt;</div>
<div class="a" style="left:83.92px;top:281.25px;width:24.11px;height:6.4px;background:#f57373;border-radius:1.4px"></div>
<div class="tm" style="left:85.62px;top:279.45px;line-height:12px;font-size:4.85px;color:#3b1a1a">78.6 ms</div>
<div class="a" style="left:114.33px;top:283.95px;width:1px;height:1px;border-radius:50%;background:#bfe3d1"></div>
</div>
<div class="a" style="left:643.2px;top:179.8px;width:5.6px;height:8.4px;background:#fff;border-radius:1.4px 0 0 1.4px;box-shadow:0 0 1px rgba(0,0,0,0.25)"></div>
<svg class="a" style="left:645px;top:182.3px" width="2.4" height="3" viewBox="0 0 2.4 3"><path d="M2.4 0 V3 L0 1.5 Z" fill="#555"/></svg>
<div class="a" style="left:822.20px;top:52.60px;width:1.40px;height:202.40px;background:#9eabb6;border-radius:0.7px"></div>
<div class="a" style="left:652.90px;top:335.70px;width:118.80px;height:1.80px;background:#b9c6cd;border-radius:0.9px"></div>
<svg class="a" style="left:832.2px;top:50.1px" width="3.2" height="2.6" viewBox="0 0 3.2 2.6"><path d="M0 0 H3.2 L1.6 2.6 Z" fill="#b5bcc3"/></svg>
<div class="ts" style="left:838.70px;top:46.10px;line-height:12px;font-size:6.9px;color:#5a6b7d;">props</div>
<div class="tm" style="left:844.70px;top:61.30px;line-height:12px;font-size:6.45px;color:#8f4ff0">border<span style="color:#9aa">:</span> <span style="color:#2257d6">false</span></div>
<div class="tm" style="left:844.70px;top:70.60px;line-height:12px;font-size:6.45px;color:#8f4ff0">cellClassName<span style="color:#9aa">:</span> <span style="color:#a5a5a5">undefined</span></div>
<div class="tm" style="left:844.70px;top:79.90px;line-height:12px;font-size:6.45px;color:#8f4ff0">cellStyle<span style="color:#9aa">:</span> <span style="color:#a5a5a5">undefined</span></div>
<div class="tm" style="left:844.70px;top:89.20px;line-height:12px;font-size:6.45px;color:#8f4ff0">context<span style="color:#9aa">:</span> <span style="color:#a5a5a5">undefined</span></div>
<div class="tm" style="left:844.70px;top:98.50px;line-height:12px;font-size:6.45px;color:#8f4ff0">currentRowKey<span style="color:#9aa">:</span> <span style="color:#a5a5a5">undefined</span></div>
<svg class="a" style="left:837.90px;top:111.10px" width="3.2" height="2.6" viewBox="0 0 3.2 2.6"><path d="M0 0 H3.2 L1.6 2.6 Z" fill="#a7adb3"/></svg>
<div class="tm" style="left:844.70px;top:107.80px;line-height:12px;font-size:6.45px;color:#8f4ff0">data<span style="color:#9aa">:</span> <span style="color:#3a3a3a">Array[4]</span></div>
<svg class="a" style="left:844.50px;top:120.00px" width="2.6" height="3.2" viewBox="0 0 2.6 3.2"><path d="M0 0 V3.2 L2.6 1.6 Z" fill="#a7adb3"/></svg>
<div class="tm" style="left:851.00px;top:117.10px;line-height:12px;font-size:6.45px;color:#8f4ff0">0<span style="color:#9aa">:</span> <span style="color:#3a3a3a">Object</span></div>
<svg class="a" style="left:844.50px;top:129.30px" width="2.6" height="3.2" viewBox="0 0 2.6 3.2"><path d="M0 0 V3.2 L2.6 1.6 Z" fill="#a7adb3"/></svg>
<div class="tm" style="left:851.00px;top:126.40px;line-height:12px;font-size:6.45px;color:#8f4ff0">1<span style="color:#9aa">:</span> <span style="color:#3a3a3a">Object</span></div>
<svg class="a" style="left:844.50px;top:138.60px" width="2.6" height="3.2" viewBox="0 0 2.6 3.2"><path d="M0 0 V3.2 L2.6 1.6 Z" fill="#a7adb3"/></svg>
<div class="tm" style="left:851.00px;top:135.70px;line-height:12px;font-size:6.45px;color:#8f4ff0">2<span style="color:#9aa">:</span> <span style="color:#3a3a3a">Object</span></div>
<svg class="a" style="left:844.50px;top:147.90px" width="2.6" height="3.2" viewBox="0 0 2.6 3.2"><path d="M0 0 V3.2 L2.6 1.6 Z" fill="#a7adb3"/></svg>
<div class="tm" style="left:851.00px;top:145.00px;line-height:12px;font-size:6.45px;color:#8f4ff0">3<span style="color:#9aa">:</span> <span style="color:#3a3a3a">Object</span></div>
<div class="tm" style="left:844.70px;top:154.30px;line-height:12px;font-size:6.45px;color:#8f4ff0">defaultExpandAll<span style="color:#9aa">:</span> <span style="color:#2257d6">false</span></div>
<div class="tm" style="left:844.70px;top:163.60px;line-height:12px;font-size:6.45px;color:#8f4ff0">defaultSort<span style="color:#9aa">:</span> <span style="color:#a5a5a5">undefined</span></div>
<div class="tm" style="left:844.70px;top:172.90px;line-height:12px;font-size:6.45px;color:#8f4ff0">emptyText<span style="color:#9aa">:</span> <span style="color:#a5a5a5">undefined</span></div>
<div class="tm" style="left:844.70px;top:182.20px;line-height:12px;font-size:6.45px;color:#8f4ff0">expandRowKeys<span style="color:#9aa">:</span> <span style="color:#a5a5a5">undefined</span></div>
<div class="tm" style="left:844.70px;top:191.50px;line-height:12px;font-size:6.45px;color:#8f4ff0">fit<span style="color:#9aa">:</span> <span style="color:#2257d6">true</span></div>
<div class="tm" style="left:844.70px;top:200.80px;line-height:12px;font-size:6.45px;color:#8f4ff0">headerCellClassName<span style="color:#9aa">:</span> <span style="color:#a5a5a5">undefined</span></div>
<div class="tm" style="left:844.70px;top:210.10px;line-height:12px;font-size:6.45px;color:#8f4ff0">headerCellStyle<span style="color:#9aa">:</span> <span style="color:#a5a5a5">undefined</span></div>
<div class="tm" style="left:844.70px;top:219.40px;line-height:12px;font-size:6.45px;color:#8f4ff0">headerRowClassName<span style="color:#9aa">:</span> <span style="color:#a5a5a5">undefined</span></div>
<div class="tm" style="left:844.70px;top:228.70px;line-height:12px;font-size:6.45px;color:#8f4ff0">headerRowStyle<span style="color:#9aa">:</span> <span style="color:#a5a5a5">undefined</span></div>
<div class="tm" style="left:844.70px;top:238.00px;line-height:12px;font-size:6.45px;color:#8f4ff0">height<span style="color:#9aa">:</span> <span style="color:#a5a5a5">undefined</span></div>
<div class="tm" style="left:844.70px;top:247.30px;line-height:12px;font-size:6.45px;color:#8f4ff0">highlightCurrentRow<span style="color:#9aa">:</span> <span style="color:#2257d6">false</span></div>
<div class="tm" style="left:844.70px;top:256.60px;line-height:12px;font-size:6.45px;color:#8f4ff0">highlightSelectionRow<span style="color:#9aa">:</span> <span style="color:#2257d6">false</span></div>
<div class="tm" style="left:844.70px;top:265.90px;line-height:12px;font-size:6.45px;color:#8f4ff0">indent<span style="color:#9aa">:</span> <span style="color:#2257d6">16</span></div>
<div class="tm" style="left:844.70px;top:275.20px;line-height:12px;font-size:6.45px;color:#8f4ff0">lazy<span style="color:#9aa">:</span> <span style="color:#2257d6">false</span></div>
<div class="tm" style="left:844.70px;top:284.50px;line-height:12px;font-size:6.45px;color:#8f4ff0">load<span style="color:#9aa">:</span> <span style="color:#a5a5a5">undefined</span></div>
<div class="tm" style="left:844.70px;top:293.80px;line-height:12px;font-size:6.45px;color:#8f4ff0">maxHeight<span style="color:#9aa">:</span> <span style="color:#a5a5a5">undefined</span></div>
<div class="tm" style="left:844.70px;top:303.10px;line-height:12px;font-size:6.45px;color:#8f4ff0">rowClassName<span style="color:#9aa">:</span> <span style="color:#a5a5a5">undefined</span></div>
<div class="tm" style="left:844.70px;top:312.40px;line-height:12px;font-size:6.45px;color:#8f4ff0">rowKey<span style="color:#9aa">:</span> <span style="color:#a5a5a5">undefined</span></div>
<div class="tm" style="left:844.70px;top:321.70px;line-height:12px;font-size:6.45px;color:#8f4ff0">rowStyle<span style="color:#9aa">:</span> <span style="color:#a5a5a5">undefined</span></div>
<div class="a" style="left:823.60px;top:46.90px;width:174.00px;height:286.60px;border:1.4px solid #e3242b;box-sizing:border-box"></div>
<div class="a" style="left:1077.00px;top:45.00px;width:1.50px;height:104.50px;background:#b8c5cd;border-radius:0.75px"></div>
<div class="a" style="left:827.30px;top:335.50px;width:212.00px;height:1.80px;background:#b9c6cd;border-radius:0.9px"></div>
<div class="a" style="left:549.00px;top:338.30px;width:531.00px;height:13.20px;background:#edf0f7"></div>
<div class="a" style="left:555.2px;top:341.84999999999997px;width:1.1px;height:1.1px;border-radius:50%;background:#474747"></div>
<div class="a" style="left:555.2px;top:344.25px;width:1.1px;height:1.1px;border-radius:50%;background:#474747"></div>
<div class="a" style="left:555.2px;top:346.65px;width:1.1px;height:1.1px;border-radius:50%;background:#474747"></div>
<div class="ts" style="left:565.80px;top:339.00px;line-height:12px;font-size:5.55px;color:#3a3a3a;">控制台</div>
<div class="ts" style="left:591.60px;top:339.00px;line-height:12px;font-size:5.55px;color:#3a3a3a;">搜索</div>
<div class="ts" style="left:617.50px;top:339.00px;line-height:12px;font-size:5.55px;color:#3a3a3a;">渲染</div>
<div class="ts" style="left:685.30px;top:339.00px;line-height:12px;font-size:5.55px;color:#3a3a3a;">协议监视器</div>
<div class="ts" style="left:727.60px;top:339.00px;line-height:12px;font-size:5.55px;color:#3a3a3a;">动画</div>
<div class="ts" style="left:753.00px;top:339.00px;line-height:12px;font-size:5.55px;color:#3a3a3a;">覆盖率</div>
<div class="ts" style="left:784.00px;top:339.00px;line-height:12px;font-size:5.55px;color:#3a3a3a;">新功能</div>
<div class="ts" style="left:814.80px;top:339.00px;line-height:12px;font-size:5.55px;color:#3a3a3a;">开发者资源</div>
<div class="ts" style="left:856.90px;top:339.00px;line-height:12px;font-size:5.55px;color:#3a3a3a;">问题</div>
<div class="ts" style="left:882.70px;top:339.00px;line-height:12px;font-size:5.55px;color:#3a3a3a;">网络状况</div>
<div class="ts" style="left:919.70px;top:339.00px;line-height:12px;font-size:5.55px;color:#3a3a3a;">变更</div>
<div class="ts" style="left:643.00px;top:339.00px;line-height:12px;font-size:5.55px;color:#1b6ef3;">性能监视器</div>
<svg class="a" style="left:674.8px;top:342.8px" width="4.4" height="4.4" viewBox="0 0 4.4 4.4"><path d="M0.3 0.3 L4.1 4.1 M4.1 0.3 L0.3 4.1" stroke="#474747" stroke-width="0.65"/></svg>
<div class="a" style="left:638.30px;top:350.80px;width:42.30px;height:0.90px;background:#1b6ef3"></div>
<svg class="a" style="left:1069px;top:342.3px" width="5.6" height="5.6" viewBox="0 0 5.6 5.6"><path d="M0.4 0.4 L5.2 5.2 M5.2 0.4 L0.4 5.2" stroke="#474747" stroke-width="0.75"/></svg>
<svg class="a" style="left:555.5px;top:357.50px" width="4.2" height="3.4" viewBox="0 0 4.2 3.4"><path d="M0.4 1.9 L1.5 2.9 L3.9 0.5" fill="none" stroke="#f2b01e" stroke-width="0.75"/></svg>
<div class="ts" style="left:561.20px;top:354.20px;line-height:12px;font-size:5.45px;color:#333;">CPU 使用情况</div>
<div class="ts" style="left:590px;width:50.3px;text-align:right;top:353.90px;line-height:12px;font-size:5.6px;color:#f2b01e">0.7%</div>
<svg class="a" style="left:555.5px;top:369.85px" width="4.2" height="3.4" viewBox="0 0 4.2 3.4"><path d="M0.4 1.9 L1.5 2.9 L3.9 0.5" fill="none" stroke="#c58af9" stroke-width="0.75"/></svg>
<div class="ts" style="left:561.20px;top:366.55px;line-height:12px;font-size:5.45px;color:#333;">JS 堆大小</div>
<div class="ts" style="left:590px;width:50.3px;text-align:right;top:366.25px;line-height:12px;font-size:5.6px;color:#c58af9">40.1 MB</div>
<svg class="a" style="left:555.5px;top:382.20px" width="4.2" height="3.4" viewBox="0 0 4.2 3.4"><path d="M0.4 1.9 L1.5 2.9 L3.9 0.5" fill="none" stroke="#1e8e3e" stroke-width="0.75"/></svg>
<div class="ts" style="left:561.20px;top:378.90px;line-height:12px;font-size:5.45px;color:#333;">DOM 节点</div>
<div class="ts" style="left:590px;width:50.3px;text-align:right;top:378.60px;line-height:12px;font-size:5.6px;color:#1e8e3e">18,750</div>
<svg class="a" style="left:555.5px;top:394.55px" width="4.2" height="3.4" viewBox="0 0 4.2 3.4"><path d="M0.4 1.9 L1.5 2.9 L3.9 0.5" fill="none" stroke="#5cd68a" stroke-width="0.75"/></svg>
<div class="ts" style="left:561.20px;top:391.25px;line-height:12px;font-size:5.45px;color:#333;">JS 事件监听器</div>
<div class="ts" style="left:590px;width:50.3px;text-align:right;top:390.95px;line-height:12px;font-size:5.6px;color:#5cd68a">4,636</div>
<svg class="a" style="left:555.5px;top:406.90px" width="4.2" height="3.4" viewBox="0 0 4.2 3.4"><path d="M0.4 1.9 L1.5 2.9 L3.9 0.5" fill="none" stroke="#999" stroke-width="0.75"/></svg>
<div class="ts" style="left:561.20px;top:403.60px;line-height:12px;font-size:5.45px;color:#888;">文档</div>
<svg class="a" style="left:555.5px;top:419.25px" width="4.2" height="3.4" viewBox="0 0 4.2 3.4"><path d="M0.4 1.9 L1.5 2.9 L3.9 0.5" fill="none" stroke="#999" stroke-width="0.75"/></svg>
<div class="ts" style="left:561.20px;top:415.95px;line-height:12px;font-size:5.45px;color:#888;">文档框架</div>
<svg class="a" style="left:555.5px;top:431.60px" width="4.2" height="3.4" viewBox="0 0 4.2 3.4"><path d="M0.4 1.9 L1.5 2.9 L3.9 0.5" fill="none" stroke="#999" stroke-width="0.75"/></svg>
<div class="ts" style="left:561.20px;top:428.30px;line-height:12px;font-size:5.45px;color:#888;">布局个数/秒</div>
<svg class="a" style="left:555.5px;top:443.95px" width="4.2" height="3.4" viewBox="0 0 4.2 3.4"><path d="M0.4 1.9 L1.5 2.9 L3.9 0.5" fill="none" stroke="#999" stroke-width="0.75"/></svg>
<div class="ts" style="left:561.20px;top:440.65px;line-height:12px;font-size:5.45px;color:#888;">样式重新计算次数/秒</div>
<div class="a" style="left:646.50px;top:351.50px;width:0.80px;height:204.50px;background:#e6eefa"></div>
<svg class="a" style="left:0;top:0" width="1080" height="556" viewBox="0 0 1080 556">
<path d="M654.57 351.5 V525.8" stroke="#f7f7f7" stroke-width="0.6"/>
<path d="M662.30 351.5 V525.8" stroke="#e6e6e6" stroke-width="0.7"/>
<path d="M670.03 351.5 V525.8" stroke="#f7f7f7" stroke-width="0.6"/>
<path d="M677.77 351.5 V525.8" stroke="#f7f7f7" stroke-width="0.6"/>
<path d="M685.50 351.5 V525.8" stroke="#f7f7f7" stroke-width="0.6"/>
<path d="M693.23 351.5 V525.8" stroke="#f7f7f7" stroke-width="0.6"/>
<path d="M700.97 351.5 V525.8" stroke="#f7f7f7" stroke-width="0.6"/>
<path d="M708.70 351.5 V525.8" stroke="#e6e6e6" stroke-width="0.7"/>
<path d="M716.43 351.5 V525.8" stroke="#f7f7f7" stroke-width="0.6"/>
<path d="M724.17 351.5 V525.8" stroke="#f7f7f7" stroke-width="0.6"/>
<path d="M731.90 351.5 V525.8" stroke="#f7f7f7" stroke-width="0.6"/>
<path d="M739.63 351.5 V525.8" stroke="#f7f7f7" stroke-width="0.6"/>
<path d="M747.37 351.5 V525.8" stroke="#f7f7f7" stroke-width="0.6"/>
<path d="M755.10 351.5 V525.8" stroke="#e6e6e6" stroke-width="0.7"/>
<path d="M762.83 351.5 V525.8" stroke="#f7f7f7" stroke-width="0.6"/>
<path d="M770.57 351.5 V525.8" stroke="#f7f7f7" stroke-width="0.6"/>
<path d="M778.30 351.5 V525.8" stroke="#f7f7f7" stroke-width="0.6"/>
<path d="M786.03 351.5 V525.8" stroke="#f7f7f7" stroke-width="0.6"/>
<path d="M793.77 351.5 V525.8" stroke="#f7f7f7" stroke-width="0.6"/>
<path d="M801.50 351.5 V525.8" stroke="#e6e6e6" stroke-width="0.7"/>
<path d="M809.23 351.5 V525.8" stroke="#f7f7f7" stroke-width="0.6"/>
<path d="M816.97 351.5 V525.8" stroke="#f7f7f7" stroke-width="0.6"/>
<path d="M824.70 351.5 V525.8" stroke="#f7f7f7" stroke-width="0.6"/>
<path d="M832.43 351.5 V525.8" stroke="#f7f7f7" stroke-width="0.6"/>
<path d="M840.17 351.5 V525.8" stroke="#f7f7f7" stroke-width="0.6"/>
<path d="M847.90 351.5 V525.8" stroke="#e6e6e6" stroke-width="0.7"/>
<path d="M855.63 351.5 V525.8" stroke="#f7f7f7" stroke-width="0.6"/>
<path d="M863.37 351.5 V525.8" stroke="#f7f7f7" stroke-width="0.6"/>
<path d="M871.10 351.5 V525.8" stroke="#f7f7f7" stroke-width="0.6"/>
<path d="M878.83 351.5 V525.8" stroke="#f7f7f7" stroke-width="0.6"/>
<path d="M886.57 351.5 V525.8" stroke="#f7f7f7" stroke-width="0.6"/>
<path d="M894.30 351.5 V525.8" stroke="#e6e6e6" stroke-width="0.7"/>
<path d="M902.03 351.5 V525.8" stroke="#f7f7f7" stroke-width="0.6"/>
<path d="M909.77 351.5 V525.8" stroke="#f7f7f7" stroke-width="0.6"/>
<path d="M917.50 351.5 V525.8" stroke="#f7f7f7" stroke-width="0.6"/>
<path d="M925.23 351.5 V525.8" stroke="#f7f7f7" stroke-width="0.6"/>
<path d="M932.97 351.5 V525.8" stroke="#f7f7f7" stroke-width="0.6"/>
<path d="M940.70 351.5 V525.8" stroke="#e6e6e6" stroke-width="0.7"/>
<path d="M948.43 351.5 V525.8" stroke="#f7f7f7" stroke-width="0.6"/>
<path d="M956.17 351.5 V525.8" stroke="#f7f7f7" stroke-width="0.6"/>
<path d="M963.90 351.5 V525.8" stroke="#f7f7f7" stroke-width="0.6"/>
<path d="M971.63 351.5 V525.8" stroke="#f7f7f7" stroke-width="0.6"/>
<path d="M979.37 351.5 V525.8" stroke="#f7f7f7" stroke-width="0.6"/>
<path d="M987.10 351.5 V525.8" stroke="#e6e6e6" stroke-width="0.7"/>
<path d="M994.83 351.5 V525.8" stroke="#f7f7f7" stroke-width="0.6"/>
<path d="M1002.57 351.5 V525.8" stroke="#f7f7f7" stroke-width="0.6"/>
<path d="M1010.30 351.5 V525.8" stroke="#f7f7f7" stroke-width="0.6"/>
<path d="M1018.03 351.5 V525.8" stroke="#f7f7f7" stroke-width="0.6"/>
<path d="M1025.77 351.5 V525.8" stroke="#f7f7f7" stroke-width="0.6"/>
<path d="M1033.50 351.5 V525.8" stroke="#e6e6e6" stroke-width="0.7"/>
<path d="M1041.23 351.5 V525.8" stroke="#f7f7f7" stroke-width="0.6"/>
<path d="M1048.97 351.5 V525.8" stroke="#f7f7f7" stroke-width="0.6"/>
<path d="M1056.70 351.5 V525.8" stroke="#f7f7f7" stroke-width="0.6"/>
<path d="M1064.43 351.5 V525.8" stroke="#f7f7f7" stroke-width="0.6"/>
<path d="M1072.17 351.5 V525.8" stroke="#f7f7f7" stroke-width="0.6"/>
<path d="M1079.90 351.5 V525.8" stroke="#e6e6e6" stroke-width="0.7"/>
<path d="M663 369.1 H1080" stroke="#e8e8e8" stroke-width="0.6"/>
<path d="M660 383.4 H1080" stroke="#e8e8e8" stroke-width="0.6"/>
<path d="M667 411 H1080" stroke="#e8e8e8" stroke-width="0.6"/>
<path d="M667 425.2 H1080" stroke="#e8e8e8" stroke-width="0.6"/>
<path d="M665 452.6 H1080" stroke="#e8e8e8" stroke-width="0.6"/>
<path d="M665 467 H1080" stroke="#e8e8e8" stroke-width="0.6"/>
<path d="M661 494.2 H1080" stroke="#e8e8e8" stroke-width="0.6"/>
<path d="M661 508.8 H1080" stroke="#e8e8e8" stroke-width="0.6"/>
<path d="M646.5 439.7 V420.2 H752.7 V430.7 H970 V427.5 H982 V428.3 H1008.3 V415.8 H1045.8 V422.2 H1049.7 V426.0 H1080 V426.0 V439.7 Z" fill="#f5ebfe"/>
<path d="M646.5 420.2 H752.7 V430.7 H970 V427.5 H982 V428.3 H1008.3 V415.8 H1045.8 V422.2 H1049.7 V426.0 H1080 V426.0" fill="none" stroke="#e2c9fb" stroke-width="0.7"/>
<path d="M646.5 439.7 V429.9 H752.7 V431.0 H950 V430.3 H981.7 V431.3 H1008.3 V421.7 H1045.8 V426.2 H1080 V426.2 V439.7 Z" fill="#e9d6fb"/>
<path d="M646.5 429.9 H752.7 V431.0 H950 V430.3 H981.7 V431.3 H1008.3 V421.7 H1045.8 V426.2 H1080 V426.2" fill="none" stroke="#c58af9" stroke-width="0.7"/>
<path d="M646.5 481.2 V473.5 H752.5 V475.0 H972.9 V474.2 H983.7 V474.9 H1000.5 V473.7 H1008.2 V454.0 H1080 V454.0 V481.2 Z" fill="#cce0d2"/>
<path d="M646.5 473.5 H752.5 V475.0 H972.9 V474.2 H983.7 V474.9 H1000.5 V473.7 H1008.2 V454.0 H1080 V454.0" fill="none" stroke="#8fbf9c" stroke-width="0.7"/>
<path d="M646.5 522.9 V516.3 H746 V514.6 H753 V516.3 H945.2 V515.3 H982.5 V516.3 H1008.2 V500.2 H1080 V500.2 V522.9 Z" fill="#ddf4e3"/>
<path d="M646.5 516.3 H746 V514.6 H753 V516.3 H945.2 V515.3 H982.5 V516.3 H1008.2 V500.2 H1080 V500.2" fill="none" stroke="#b6e6c4" stroke-width="0.6"/>
<path d="M962 397.4 L965 394.5 L968 395 L970 397.4 Z M972 397.4 L974 395.6 L980 396 L985 395 L990 396 L995 395.5 L1005 396 L1008 395 L1010.6 370.4 L1013 395 L1016 396.5 L1018 397.4 Z M1027 397.4 L1031 391.5 L1035 394 L1038 397.4 Z M1044 397.4 L1048 395.5 L1052 397 L1056 395.8 L1062 397.4 Z M672 397.4 L675 395.8 L678 397.4 Z M756 397.4 L759 395.4 L762 397.4 Z" fill="#ececec" stroke="#c9c9c9" stroke-width="0.4"/>
<path d="M1007.5 397.4 L1009.5 389.8 L1011.8 389.8 L1013.6 397.4 Z M964 397.4 L966 395.6 L969 397.4 Z M1029 397.4 L1031 395 L1034 397.4 Z" fill="#f8dc8a"/>
<path d="M1008.6 397.4 L1010 393.4 L1011.4 393.4 L1012.6 397.4 Z" fill="#c58af9"/>
<path d="M670 397.4 L672 395.6 L675 397.4 Z" fill="#f8d67a"/>
<path d="M646.5 397.3 H1080" stroke="#cf9cf9" stroke-width="0.75"/>
</svg>
<div class="ts" style="left:664.50px;top:349.60px;line-height:12px;font-size:5.25px;color:#858585;">11:30:20</div>
<div class="ts" style="left:710.90px;top:349.60px;line-height:12px;font-size:5.25px;color:#858585;">11:30:30</div>
<div class="ts" style="left:757.30px;top:349.60px;line-height:12px;font-size:5.25px;color:#858585;">11:30:40</div>
<div class="ts" style="left:803.70px;top:349.60px;line-height:12px;font-size:5.25px;color:#858585;">11:30:50</div>
<div class="ts" style="left:850.10px;top:349.60px;line-height:12px;font-size:5.25px;color:#858585;">11:31:00</div>
<div class="ts" style="left:896.50px;top:349.60px;line-height:12px;font-size:5.25px;color:#858585;">11:31:10</div>
<div class="ts" style="left:942.90px;top:349.60px;line-height:12px;font-size:5.25px;color:#858585;">11:31:20</div>
<div class="ts" style="left:989.30px;top:349.60px;line-height:12px;font-size:5.25px;color:#858585;">11:31:30</div>
<div class="ts" style="left:1035.70px;top:349.60px;line-height:12px;font-size:5.25px;color:#858585;">11:31:40</div>
<div class="ts" style="left:649.80px;top:356.20px;line-height:12px;font-size:4.8px;color:#8a8a8a;">CPU 使用情况</div>
<div class="ts" style="left:649.80px;top:363.10px;line-height:12px;font-size:5.25px;color:#858585;">100%</div>
<div class="ts" style="left:649.80px;top:377.50px;line-height:12px;font-size:5.25px;color:#858585;">50%</div>
<div class="ts" style="left:649.80px;top:398.00px;line-height:12px;font-size:4.8px;color:#8a8a8a;">JS 堆大小</div>
<div class="ts" style="left:649.80px;top:405.10px;line-height:12px;font-size:5.25px;color:#858585;">80.0 MB</div>
<div class="ts" style="left:649.80px;top:419.30px;line-height:12px;font-size:5.25px;color:#858585;">40.0 MB</div>
<div class="ts" style="left:649.80px;top:440.20px;line-height:12px;font-size:4.8px;color:#8a8a8a;">DOM 节点</div>
<div class="ts" style="left:649.80px;top:446.70px;line-height:12px;font-size:5.25px;color:#858585;">20,000</div>
<div class="ts" style="left:649.80px;top:461.10px;line-height:12px;font-size:5.25px;color:#858585;">10,000</div>
<div class="ts" style="left:649.80px;top:481.80px;line-height:12px;font-size:4.8px;color:#8a8a8a;">JS 事件监听器</div>
<div class="ts" style="left:649.80px;top:488.30px;line-height:12px;font-size:5.25px;color:#858585;">6,000</div>
<div class="ts" style="left:649.80px;top:502.90px;line-height:12px;font-size:5.25px;color:#858585;">3,000</div>
<div class="tf" style="left:1010px;top:542px;line-height:12px;font-size:7.5px;color:#c9c9c9">@稀土掘金技术社区</div>
</div>
</div></body></html>
